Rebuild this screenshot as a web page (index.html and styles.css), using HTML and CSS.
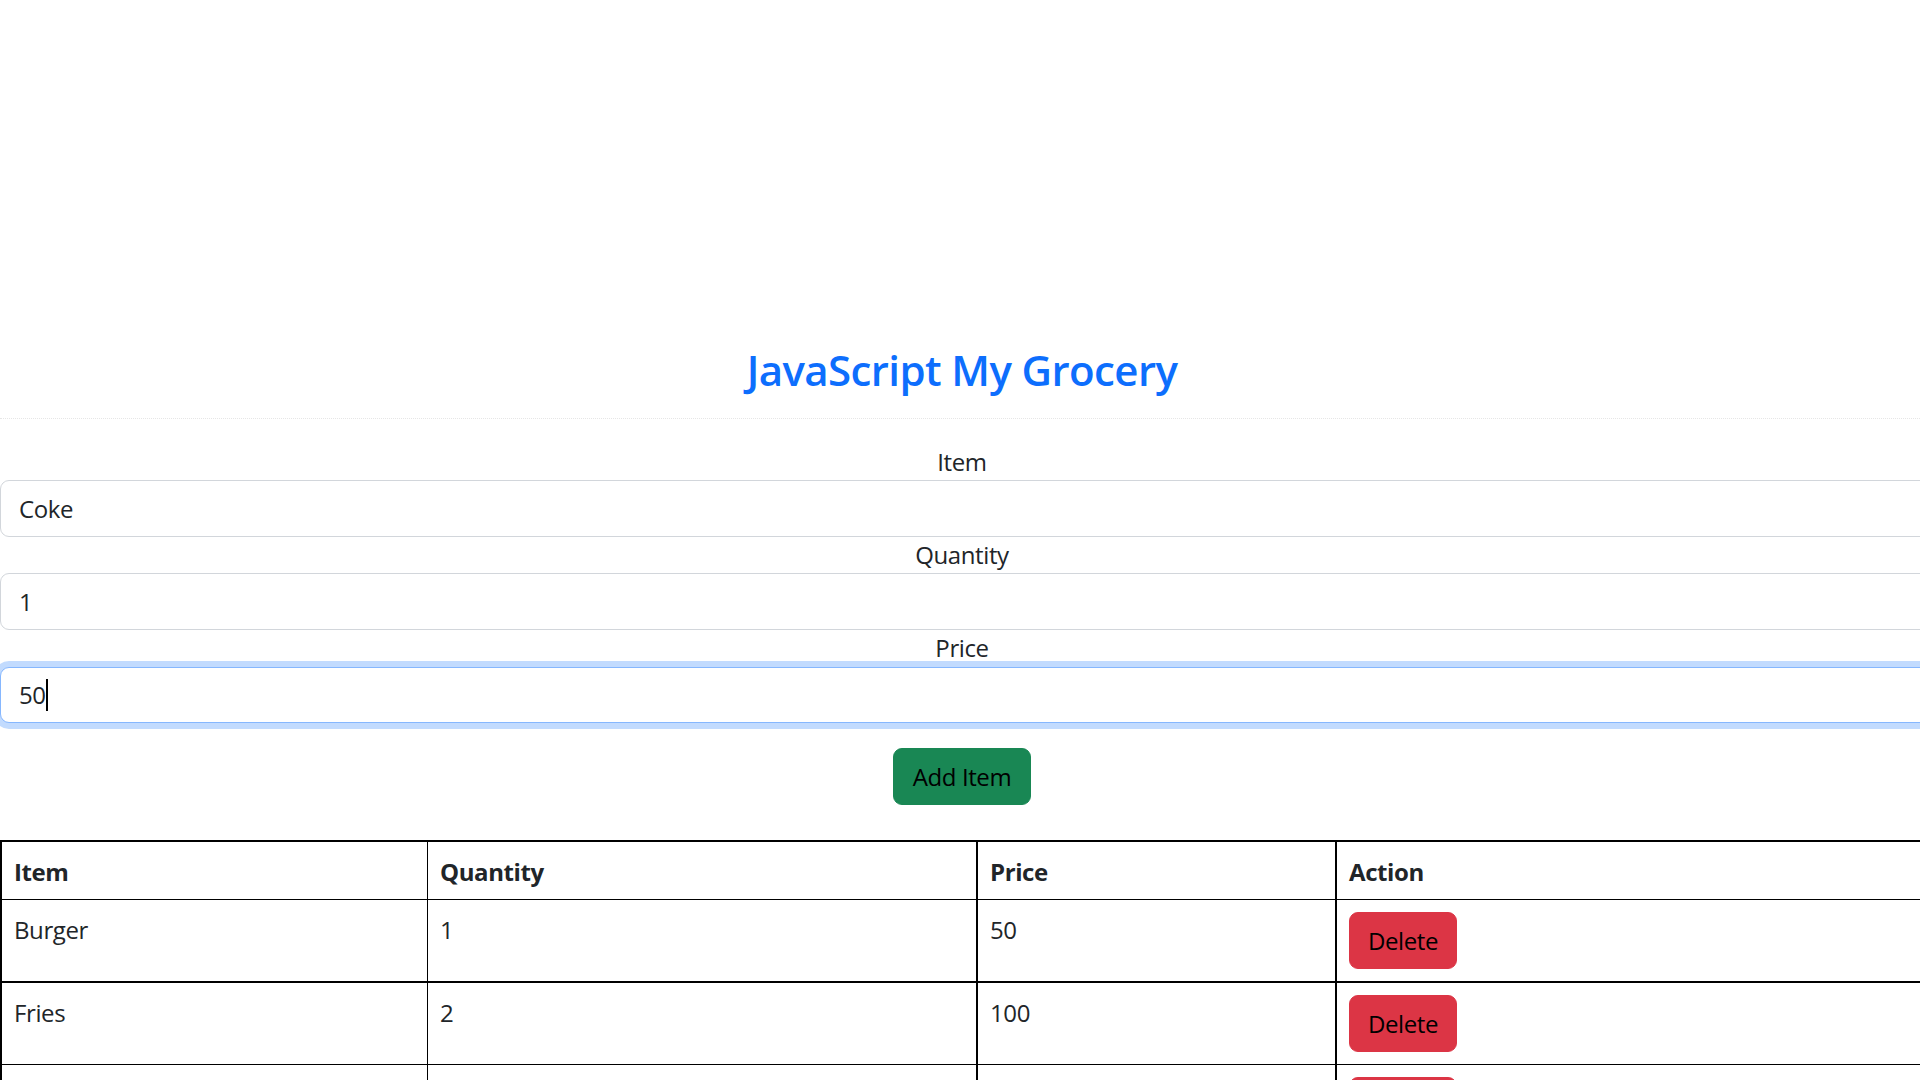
FILE: index.html
```html
<!DOCTYPE html>
<html lang="en">
<head>
<meta charset="utf-8">
<title>JavaScript My Grocery</title>
<link rel="stylesheet" href="styles.css">
</head>
<body class="page">
  <header class="title-bar">
    <h2 class="title">JavaScript My Grocery</h2>
  </header>
  <main class="content">
    <form class="grocery-form">
      <label class="field-label" for="item">Item</label>
      <input class="field-input" id="item" type="text" value="Coke">
      <label class="field-label" for="qty">Quantity</label>
      <input class="field-input" id="qty" type="text" value="1">
      <label class="field-label" for="price">Price</label>
      <div class="field-input is-focused" id="price">50<span class="caret"></span></div>
      <button class="btn btn-add" type="button">Add Item</button>
    </form>
    <table class="grocery-table">
      <thead>
        <tr>
          <th class="c1">Item</th>
          <th class="c2">Quantity</th>
          <th class="c3">Price</th>
          <th class="c4">Action</th>
        </tr>
      </thead>
      <tbody>
        <tr class="row-thick">
          <td class="c1">Burger</td>
          <td class="c2">1</td>
          <td class="c3">50</td>
          <td class="c4"><button class="btn btn-delete" type="button">Delete</button></td>
        </tr>
        <tr>
          <td class="c1">Fries</td>
          <td class="c2">2</td>
          <td class="c3">100</td>
          <td class="c4"><button class="btn btn-delete" type="button">Delete</button></td>
        </tr>
        <tr>
          <td class="c1"></td>
          <td class="c2"></td>
          <td class="c3"></td>
          <td class="c4"><button class="btn btn-delete" type="button" aria-label="Delete"></button></td>
        </tr>
      </tbody>
    </table>
  </main>
</body>
</html>
```

FILE: styles.css
```css
html, body {
  margin: 0;
  padding: 0;
  overflow: hidden;
  height: 1080px;
}

.page {
  font-family: "Open Sans", "Noto Sans", sans-serif;
  font-size: 24px;
  line-height: 36px;
  color: #212529;
  background: #fff;
}

.title-bar {
  padding-top: 341px;
  padding-bottom: 19px;
  padding-left: 4px;
  border-bottom: 1px dotted #e6e6e6;
  text-align: center;
}

.title {
  margin: 0;
  font-size: 42px;
  line-height: 58px;
  font-weight: 600;
  color: #0d6efd;
  letter-spacing: -0.6px;
}

.content {
  padding-top: 25px;
}

.grocery-form {
  margin: 0;
}

.field-label {
  display: block;
  text-align: center;
  height: 36px;
  padding-left: 4px;
  letter-spacing: -0.4px;
}

.field-input {
  display: block;
  box-sizing: border-box;
  width: 2000px;
  height: 57px;
  margin: 0;
  padding: 9px 18px;
  font-family: inherit;
  font-size: 24px;
  line-height: 36px;
  color: #212529;
  background: #fff;
  border: 1.5px solid #d2d6db;
  border-radius: 9px;
  outline: none;
  letter-spacing: -0.4px;
}

.field-input.is-focused {
  border-color: #86b7fe;
  box-shadow: 0 0 0 6px #c2dbfe;
  margin-top: 1px;
  height: 56px;
}

.caret {
  display: inline-block;
  width: 2px;
  height: 32px;
  background: #000;
  vertical-align: -7px;
}

.btn {
  display: inline-block;
  box-sizing: border-box;
  height: 57px;
  padding: 0 18px;
  font-family: inherit;
  font-size: 24px;
  line-height: 55px;
  color: #000;
  border: 1px solid transparent;
  border-radius: 9px;
  letter-spacing: -0.4px;
  cursor: pointer;
}

.btn-add {
  display: block;
  width: 138px;
  padding: 0;
  margin: 25px 0 0 calc(50% - 67px);
  background: #198754;
  border-color: #198754;
}

.btn-delete {
  width: 108px;
  padding: 0;
  background: #dc3545;
  border-color: #dc3545;
}

.grocery-table {
  margin-top: 35px;
  border-collapse: separate;
  border-spacing: 0;
  table-layout: fixed;
  width: 2137px;
  border-top: 2px solid #000;
}

.grocery-table th,
.grocery-table td {
  box-sizing: border-box;
  text-align: left;
  vertical-align: top;
  border-bottom: 1px solid #000;
  letter-spacing: -0.4px;
}

.grocery-table th {
  height: 58px;
  padding: 12px 12px 9px;
  font-weight: 700;
}

.grocery-table td {
  height: 82px;
  padding: 12px;
}

.grocery-table .row-thick td {
  border-bottom-width: 2px;
  height: 83px;
}

.c1 {
  width: 428px;
  border-left: 2px solid #000;
  border-right: 1px solid #000;
}

.c2 {
  width: 550px;
  border-right: 2px solid #000;
}

.c3 {
  width: 359px;
  border-right: 2px solid #000;
}

.c4 {
  width: 800px;
}
```
